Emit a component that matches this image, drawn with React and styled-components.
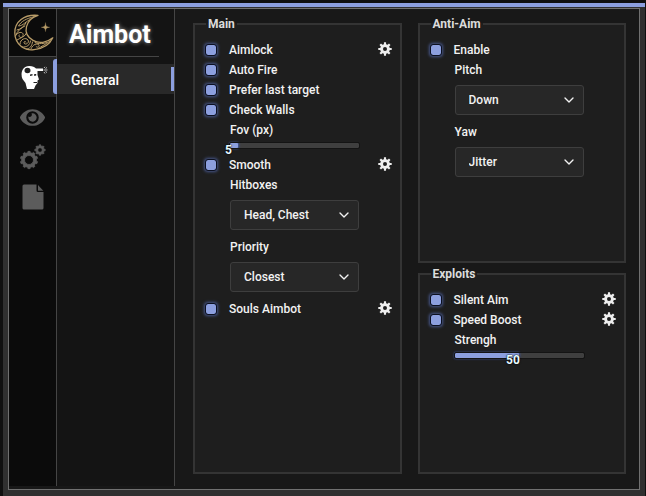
import React, { useState } from "react";
import styled, { createGlobalStyle, css } from "styled-components";
import { FaEye } from "react-icons/fa";
import { ChevronDown } from "lucide-react";

const GlobalStyle = createGlobalStyle`
  * { box-sizing: border-box; }
  body {
    margin: 0;
    background: #101010;
    color: #f2f2f2;
    font: 500 12px/20px Roboto, sans-serif;
  }
  button, input, select { font: inherit; color: inherit; margin: 0; }
`;

const accent = "#8c9fdf";

const Page = styled.div`
  display: flex;
  min-height: 100vh;
  padding: 3px 1px 0 3px;
`;

const Frame = styled.div`
  display: flex;
  flex: 1;
  padding: 1px 5px 6px;
  border-top: 4px solid ${accent};
  background: #303030;
`;

const Shell = styled.div`
  display: flex;
  flex: 1;
  border: 1px solid #707070;
  background: #181818;
`;

const Rail = styled.nav`
  display: flex;
  flex-direction: column;
  width: 48px;
  margin-bottom: 3px;
  border-right: 1px solid #454545;
  background: #0b0b0b;
`;

const LogoBox = styled.div`
  height: 48px;
  padding: 4px 0 0 4px;
  border-bottom: 1px solid #454545;
`;

const RailButton = styled.button`
  display: grid;
  place-items: center;
  position: relative;
  height: 40px;
  padding: 0;
  border: 0;
  background: none;
  color: #5c5c5c;
  ${(p) =>
    p.$active &&
    css`
      padding: 2px 0 0 2px;
      background: #222;
      color: #fff;
      &::after {
        content: "";
        position: absolute;
        top: 2px;
        bottom: 3px;
        right: -1px;
        width: 4px;
        border-radius: 3px 0 0 3px;
        background: ${accent};
      }
    `}
`;

const Sections = styled.div`
  width: 118px;
  margin-bottom: 3px;
  border-right: 1px solid #454545;
  background: #141414;
`;

const Title = styled.h1`
  height: 48px;
  margin: 0 15px 7px 12px;
  padding-top: 7px;
  border-bottom: 1px solid #454545;
  font: 700 25px/38px Roboto, sans-serif;
  color: #fff;
  text-shadow: 0 0 4px #999;
`;

const SectionButton = styled.button`
  display: block;
  width: 100%;
  height: 30px;
  padding: 1px 0 0 14px;
  border: 0;
  background: linear-gradient(${accent}, ${accent}) right / 3px 24px no-repeat #292929;
  text-align: left;
  font-size: 14px;
  color: #fff;
`;

const Content = styled.main`
  display: grid;
  flex: 1;
  grid-template-columns: 1fr 1fr;
  gap: 16px;
  padding: 5px 13px 15px 18px;
`;

const Column = styled.div`
  display: grid;
  grid-template-rows: ${(p) => p.$rows || "1fr"};
  gap: 1px;
`;

const Group = styled.fieldset`
  min-width: 0;
  margin: 0;
  padding: 6px 8px 8px 11px;
  border: 2px solid #343434;
  background: #1e1e1e;
`;

const Legend = styled.legend`
  padding: 0 2px;
  font-weight: 700;
  color: #dcdcdc;
`;

const Row = styled.div`
  display: flex;
  align-items: center;
  justify-content: space-between;
  height: 20px;
`;

const CheckLabel = styled.label`
  display: flex;
  align-items: center;
  gap: 13px;
`;

const Check = styled.input`
  appearance: none;
  width: 10px;
  height: 10px;
  border-radius: 2px;
  background: #303030;
  outline: 1px solid #0c1020;
  &:checked {
    background: ${accent};
    box-shadow: 0 0 3px 2px #465689;
  }
`;

const GearButton = styled.button`
  display: flex;
  padding: 0 0 3px;
  border: 0;
  background: none;
  color: #eee;
`;

const Field = styled.div`
  display: flex;
  flex-direction: column;
  width: 129px;
  margin-left: 24px;
`;

const SelectBox = styled.div`
  position: relative;
  margin: 5px 0 7px;
  svg {
    position: absolute;
    top: 7px;
    right: 7px;
    pointer-events: none;
  }
`;

const Select = styled.select`
  appearance: none;
  width: 100%;
  height: 30px;
  padding: 0 28px 0 13px;
  border: 1px solid #3e3e3e;
  border-radius: 3px;
  background: #272727;
`;

const Track = styled.div`
  position: relative;
  height: 5px;
  margin: 3px 0 7px;
  border-radius: 1px;
  background: #3f3f3f;
  outline: 1px solid #141414;
`;

const Fill = styled.div`
  height: 5px;
  border-radius: 1px;
  background: ${accent};
  box-shadow: 0 0 2px 1px #4359a5;
`;

const Range = styled.input`
  position: absolute;
  inset: 0;
  width: 100%;
  height: 100%;
  opacity: 0;
`;

const Value = styled.output`
  position: absolute;
  top: 1px;
  margin-left: -13px;
  font-weight: 700;
  line-height: 12px;
  color: #e9fbff;
  text-shadow: 0 0 2px #000, 0 0 1px #000;
  pointer-events: none;
`;

function gearPath(cx, cy, root, tip, teeth) {
  const points = [];
  const step = (Math.PI * 2) / teeth;
  for (let i = 0; i < teeth; i++) {
    [[-0.28, root], [-0.2, tip], [0.2, tip], [0.28, root]].forEach(([t, r]) => {
      const a = (i + t) * step - Math.PI / 2;
      points.push(`${(cx + r * Math.cos(a)).toFixed(2)} ${(cy + r * Math.sin(a)).toFixed(2)}`);
    });
  }
  return `M${points.join("L")}Z`;
}

const hole = (cx, cy, r) => `M${cx - r} ${cy}a${r} ${r} 0 1 0 ${r * 2} 0a${r} ${r} 0 1 0 ${-r * 2} 0Z`;

const Gear = () => (
  <svg width="14" height="14" viewBox="0 0 28 28" fill="currentColor" fillRule="evenodd">
    <path d={gearPath(14, 14, 9.8, 13.6, 8) + hole(14, 14, 4)} />
  </svg>
);

const Gears = () => (
  <svg width="26" height="26" viewBox="0 0 26 26" fill="currentColor" stroke="currentColor" strokeWidth="0.8" strokeLinejoin="round" fillRule="evenodd">
    <path d={gearPath(9, 16, 7.4, 8.7, 10) + hole(9, 16, 4.5)} />
    <path d={gearPath(20, 6, 4, 5.2, 8) + hole(20, 6, 2.3)} />
  </svg>
);

const Sheet = () => (
  <svg width="22" height="26" viewBox="0 0 22 26" fill="currentColor">
    <path d="M2 .5H14.5V6.5Q14.5 8 16 8H21.5V24Q21.5 25.5 20 25.5H2Q.5 25.5.5 24V2Q.5.5 2 .5Z" />
    <path d="M16 1L21.3 6.8H16Z" />
  </svg>
);

const Head = () => (
  <svg width="28" height="26" viewBox="0 0 28 26" fill="currentColor">
    <path fillRule="evenodd" d="M2.5 5Q4.5 1 9.5 1Q14 1 16 3.5H23V6H17.5V10L19 14.5L17.5 15.5V18L15.5 20.5L14 24H7L5.5 18L2.5 14Q.5 9 2.5 5ZM4.5 5.5a3 2.8 0 1 0 6 0a3 2.8 0 1 0-6 0ZM10 9.5L12.5 9V10.5L10 11ZM14.2 9H16.2V10.5L14.2 11ZM13.5 17H17V18H13.5Z" />
    <path d="M23.5 5H27.5M24 3L25 1.8M25.5 3.5L27 2.5M24 7L25 8.5M25.5 6.5L27 7.5" fill="none" stroke="currentColor" strokeWidth=".7" />
  </svg>
);

const Moon = () => (
  <svg width="42" height="40" viewBox="0 0 42 40" fill="none" stroke="#b89c68" strokeWidth="1.3" strokeLinecap="round" strokeLinejoin="round" role="img" aria-label="Moon">
    <path d="M25 2.4C11 1 1.5 9 1.8 20C2.1 31 11 38 21 36.7C31 35.7 37 31 39.8 24.8C34 29.7 26 31 20 27.4C8 20.5 13 6 25 2.4Z" />
    <g strokeWidth="1">
      <path d="M21 3.8C13 5.5 8 8.5 5.5 13C10 13 13 8 18 6M4 17C8 16 10.5 14 13 10M11.8 13C8 15 4 18 2.5 23" />
      <path d="M3 22C7 17 12 20 9.5 23.5C8 25.5 5 24 6.2 22M4 27C8 24.5 12 24 13.5 20M7 31C7 26 13 24 15 27C17 30 12 32.5 11 30C10.6 28.6 12.2 28 13 29" />
      <path d="M9 34C14 34.5 17 32 17.5 28M13.5 36C17 35.8 19 33 19.5 29M18 35.8C20 31 24 30 26 32C27 34 24 35 23 33.5M25 35.7C28 33.5 32 32 37 28M22 29.5C26 31.5 31 30.5 34 29.5" />
    </g>
    <path fill="#b89c68" strokeWidth=".3" d="M32.5 10C32.9 13.2 33.3 13.8 36.7 14.3C33.3 14.8 32.9 15.4 32.5 18.6C32.1 15.4 31.7 14.8 28.3 14.3C31.7 13.8 32.1 13.2 32.5 10Z" />
  </svg>
);

function Option({ label, gear }) {
  return (
    <Row>
      <CheckLabel>
        <Check type="checkbox" defaultChecked />
        {label}
      </CheckLabel>
      {gear && (
        <GearButton type="button" aria-label={`${label} settings`}>
          <Gear />
        </GearButton>
      )}
    </Row>
  );
}

function Picker({ id, label, options }) {
  return (
    <Field>
      <label htmlFor={id}>{label}</label>
      <SelectBox>
        <Select id={id}>
          {options.map((o) => (
            <option key={o}>{o}</option>
          ))}
        </Select>
        <ChevronDown size={16} strokeWidth={2} />
      </SelectBox>
    </Field>
  );
}

function Slider({ id, label, initial, max }) {
  const [value, setValue] = useState(initial);
  const percent = `${(value / max) * 100}%`;
  return (
    <Field>
      <label htmlFor={id}>{label}</label>
      <Track>
        <Fill style={{ width: percent }} />
        <Value htmlFor={id} style={{ left: percent }}>{value}</Value>
        <Range id={id} type="range" min="0" max={max} value={value} onChange={(e) => setValue(Number(e.target.value))} />
      </Track>
    </Field>
  );
}

export default function App() {
  return (
    <Page>
      <GlobalStyle />
      <Frame>
        <Shell>
          <Rail>
            <LogoBox><Moon /></LogoBox>
            <RailButton $active type="button" aria-label="Aimbot"><Head /></RailButton>
            <RailButton type="button" aria-label="Visuals"><FaEye size={25} /></RailButton>
            <RailButton type="button" aria-label="Settings"><Gears /></RailButton>
            <RailButton type="button" aria-label="Configs"><Sheet /></RailButton>
          </Rail>
          <Sections>
            <Title>Aimbot</Title>
            <SectionButton type="button">General</SectionButton>
          </Sections>
          <Content>
            <Column>
              <Group>
                <Legend>Main</Legend>
                <Option label="Aimlock" gear />
                <Option label="Auto Fire" />
                <Option label="Prefer last target" />
                <Option label="Check Walls" />
                <Slider id="fov" label="Fov (px)" initial={5} max={80} />
                <Option label="Smooth" gear />
                <Picker id="hitboxes" label="Hitboxes" options={["Head, Chest"]} />
                <Picker id="priority" label="Priority" options={["Closest"]} />
                <Option label="Souls Aimbot" gear />
              </Group>
            </Column>
            <Column $rows="249fr 210fr">
              <Group>
                <Legend>Anti-Aim</Legend>
                <Option label="Enable" />
                <Picker id="pitch" label="Pitch" options={["Down"]} />
                <Picker id="yaw" label="Yaw" options={["Jitter"]} />
              </Group>
              <Group>
                <Legend>Exploits</Legend>
                <Option label="Silent Aim" gear />
                <Option label="Speed Boost" gear />
                <Slider id="strength" label="Strengh" initial={50} max={100} />
              </Group>
            </Column>
          </Content>
        </Shell>
      </Frame>
    </Page>
  );
}
